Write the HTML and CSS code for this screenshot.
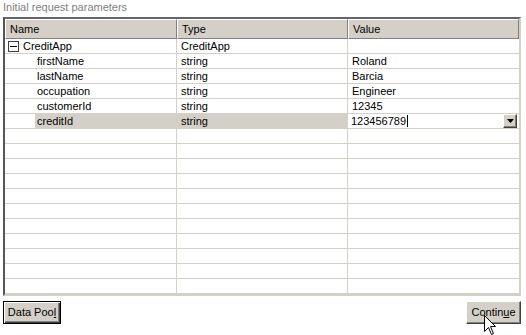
FILE: index.html
```html
<!DOCTYPE html>
<html>
<head>
<meta charset="utf-8">
<link rel="stylesheet" href="styles.css">
</head>
<body>
<div class="page">
  <div class="title">Initial request parameters</div>
  <div class="grid">
    <div class="row head">
      <div class="hcell">Name</div>
      <div class="hcell">Type</div>
      <div class="hcell last">Value</div>
    </div>
    <div class="row">
      <div class="cell name root"><span class="toggle"><span class="minus"></span></span>CreditApp</div>
      <div class="cell">CreditApp</div>
      <div class="cell last"></div>
    </div>
    <div class="row">
      <div class="cell name child">firstName</div>
      <div class="cell">string</div>
      <div class="cell last">Roland</div>
    </div>
    <div class="row">
      <div class="cell name child">lastName</div>
      <div class="cell">string</div>
      <div class="cell last">Barcia</div>
    </div>
    <div class="row">
      <div class="cell name child">occupation</div>
      <div class="cell">string</div>
      <div class="cell last">Engineer</div>
    </div>
    <div class="row">
      <div class="cell name child">customerId</div>
      <div class="cell">string</div>
      <div class="cell last">12345</div>
    </div>
    <div class="row selected">
      <div class="cell name child"><span class="sel">creditId</span></div>
      <div class="cell sel-cell">string</div>
      <div class="cell last editor"><span class="edit-text">123456789</span><span class="caret"></span><span class="drop"><svg width="7" height="4" viewBox="0 0 7 4"><path d="M0 0H7L3.5 4Z" fill="#000"/></svg></span></div>
    </div>
    <div class="row"><div class="cell"></div><div class="cell"></div><div class="cell last"></div></div>
    <div class="row"><div class="cell"></div><div class="cell"></div><div class="cell last"></div></div>
    <div class="row"><div class="cell"></div><div class="cell"></div><div class="cell last"></div></div>
    <div class="row"><div class="cell"></div><div class="cell"></div><div class="cell last"></div></div>
    <div class="row"><div class="cell"></div><div class="cell"></div><div class="cell last"></div></div>
    <div class="row"><div class="cell"></div><div class="cell"></div><div class="cell last"></div></div>
    <div class="row"><div class="cell"></div><div class="cell"></div><div class="cell last"></div></div>
    <div class="row"><div class="cell"></div><div class="cell"></div><div class="cell last"></div></div>
    <div class="row"><div class="cell"></div><div class="cell"></div><div class="cell last"></div></div>
    <div class="row"><div class="cell"></div><div class="cell"></div><div class="cell last"></div></div>
    <div class="row"><div class="cell"></div><div class="cell"></div><div class="cell last"></div></div>
  </div>
  <div class="footer">
    <button class="btn default">Data Poo<u>l</u></button>
    <button class="btn">Contin<u>u</u>e</button>
  </div>
  <svg class="cursor" width="13" height="21" viewBox="0 0 13 21"><path d="M0.5 0.5V16.5L4.5 12.5L7.5 19.5L9.5 18.5L6.5 11.5H11.5Z" fill="#fff" stroke="#000" stroke-width="1" stroke-linejoin="miter"/></svg>
</div>
</body>
</html>
```
FILE: styles.css
```css
html, body {
  margin: 0;
  padding: 0;
  background: #fff;
}
body {
  font-family: "Liberation Sans", Arial, sans-serif;
  font-size: 11px;
  color: #000;
}
.page {
  position: relative;
  width: 526px;
  height: 335px;
  padding: 0 5px 0 3px;
  box-sizing: border-box;
}
.title {
  color: #808080;
  height: 17px;
  line-height: 14px;
  padding-top: 0;
  box-sizing: border-box;
}
.grid {
  border: 2px solid;
  border-color: #555 #d4d0c8 #d4d0c8 #555;
  border-top-color: #666;
  box-sizing: border-box;
  width: 518px;
}
.row {
  display: grid;
  grid-template-columns: 172px 171px 1fr;
  height: 15px;
}
.row.head {
  height: 20px;
}
.hcell {
  background: #d4d0c8;
  border-top: 1px solid #fff;
  border-left: 1px solid #fff;
  border-right: 1px solid #808080;
  border-bottom: 1px solid #808080;
  line-height: 18px;
  padding-left: 4px;
  box-sizing: border-box;
}
.cell {
  border-right: 1px solid #d4d0c8;
  border-bottom: 1px solid #d4d0c8;
  line-height: 15px;
  padding-left: 4px;
  box-sizing: border-box;
  white-space: nowrap;
  overflow: hidden;
}
.cell.last {
  border-right: none;
}
.cell.name {
  padding-left: 3px;
}
.cell.root {
  display: flex;
  align-items: center;
  gap: 4px;
}
.toggle {
  width: 9px;
  height: 9px;
  border: 1px solid #404040;
  position: relative;
  display: inline-block;
  background: #fff;
}
.minus {
  position: absolute;
  left: 1px;
  right: 1px;
  top: 4px;
  height: 1px;
  background: #000;
}
.cell.child {
  padding-left: 32px;
}
.selected .cell.name {
  padding-left: 30px;
}
.sel {
  display: block;
  background: #d4d0c8;
  padding-left: 2px;
  height: 14px;
}
.sel-cell {
  background: #d4d0c8;
}
.editor {
  display: flex;
  align-items: center;
  padding-left: 3px;
  padding-right: 2px;
}
.caret {
  width: 1px;
  height: 12px;
  background: #000;
  margin-left: 1px;
}
.drop {
  margin-left: auto;
  width: 14px;
  height: 14px;
  box-sizing: border-box;
  background: #d4d0c8;
  border-top: 1px solid #fff;
  border-left: 1px solid #fff;
  border-right: 1px solid #404040;
  border-bottom: 1px solid #404040;
  box-shadow: inset -1px -1px #808080;
  display: flex;
  align-items: center;
  justify-content: center;
}
.footer {
  display: flex;
  justify-content: space-between;
  margin-top: 5px;
}
.btn {
  font-family: "Liberation Sans", Arial, sans-serif;
  font-size: 11px;
  color: #000;
  background: #d4d0c8;
  height: 23px;
  padding: 0 2px;
  box-sizing: border-box;
  border: 1px solid;
  border-color: #fff #404040 #404040 #fff;
  box-shadow: inset -1px -1px #808080;
  border-radius: 0;
  line-height: 19px;
  white-space: nowrap;
}
.btn.default {
  width: 58px;
  border: 1px solid #000;
  box-shadow: inset 1px 1px #fff, inset -1px -1px #404040, inset -2px -2px #808080;
}
.btn:last-child {
  width: 55px;
}
.cursor {
  position: absolute;
  left: 484px;
  top: 315px;
}
```
